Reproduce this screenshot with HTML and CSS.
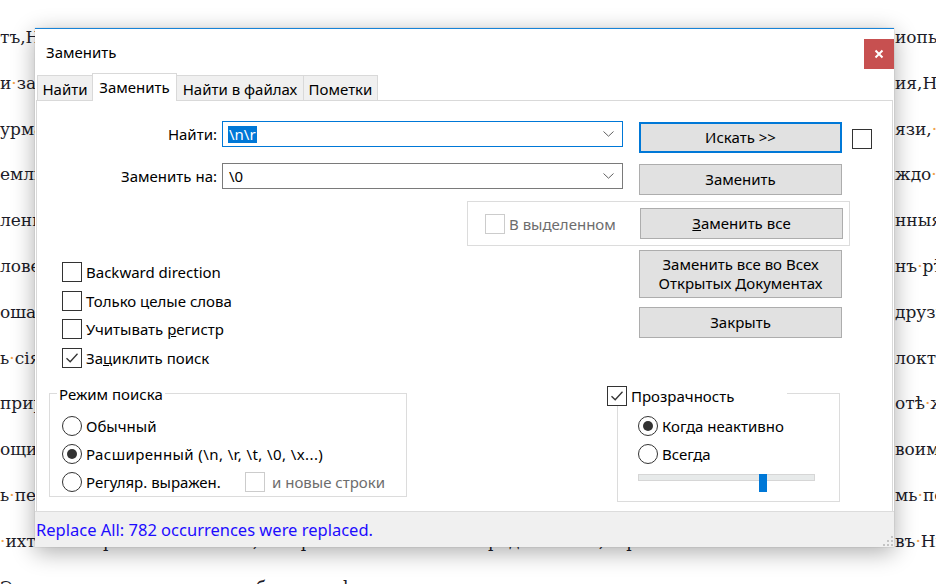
FILE: index.html
```html
<!DOCTYPE html>
<html lang="ru">
<head>
<meta charset="utf-8">
<title>Заменить</title>
<link rel="stylesheet" href="styles.css">
</head>
<body>
<div class="editor">
  <div class="line"><span class="l">тъ,Нѣкогда<i>·</i>во<i>·</i>дни<i>·</i>оны<i>·</i>жилъ<i>·</i>былъ<i>·</i>человѣкъ,<i>·</i>ему<i>·</i>же<i>·</i>имя<i>·</i>бяше</span><span class="r">иопьскій</span></div>
  <div class="line"><span class="l">и<i>·</i>закона<i>·</i>хранитель<i>·</i>бысть<i>·</i>и<i>·</i>праведенъ</span><span class="r">ия,Нѣкоторые</span></div>
  <div class="line"><span class="l">урма<i>·</i>своего<i>·</i>не<i>·</i>оставляше<i>·</i>никогда</span><span class="r">язи,<i>·</i>и<i>·</i>бысть</span></div>
  <div class="line"><span class="l">емлю<i>·</i>ту<i>·</i>населяху<i>·</i>многія<i>·</i>языки</span><span class="r">ждо<i>·</i>своя</span></div>
  <div class="line"><span class="l">лени<i>·</i>градовъ<i>·</i>и<i>·</i>весей<i>·</i>многихъ</span><span class="r">нныя<i>·</i>страны</span></div>
  <div class="line"><span class="l">лове<i>·</i>же<i>·</i>и<i>·</i>звѣри<i>·</i>въ<i>·</i>горахъ</span><span class="r">нъ<i>·</i>рѣки</span></div>
  <div class="line"><span class="l">оша<i>·</i>и<i>·</i>рыбы<i>·</i>въ<i>·</i>морѣ<i>·</i>глубоцѣмъ</span><span class="r">друзи</span></div>
  <div class="line"><span class="l">ь<i>·</i>сія<i>·</i>вся<i>·</i>видѣвъ<i>·</i>и<i>·</i>разумѣвъ</span><span class="r">локтей</span></div>
  <div class="line"><span class="l">прир<i>·</i>оды<i>·</i>всея<i>·</i>тварныя<i>·</i>написа</span><span class="r">отѣ<i>·</i>же</span></div>
  <div class="line"><span class="l">ощимъ<i>·</i>и<i>·</i>грядущимъ<i>·</i>родомъ</span><span class="r">воимъ</span></div>
  <div class="line"><span class="l">ь<i>·</i>пещеры<i>·</i>и<i>·</i>пустыни<i>·</i>многи</span><span class="r">мь<i>·</i>по</span></div>
  <div class="line"><span class="l"><i>·</i>ихтіосъ<i>·</i>бо<i>·</i>рыба<i>·</i>глаголется,<i>·</i>и<i>·</i>обрѣтоша<i>·</i>ю<i>·</i>мнози<i>·</i>во<i>·</i>градѣ<i>·</i>своемъ,<i>·</i>и<i>·</i>рекоша</span><span class="r">въ<i>·</i>Нихъ</span></div>
  <div class="line"><span class="l">Э                                             б              ѣ</span><span class="r"></span></div>
</div>

<div class="dialog">
  <div class="titlebar">
    <span class="title">Заменить</span>
    <div class="close"><svg width="10" height="10" viewBox="0 0 10 10"><path d="M1.5 1.5L8.5 8.5M8.5 1.5L1.5 8.5" stroke="#fff" stroke-width="2" fill="none"/></svg></div>
  </div>
  <div class="tabs">
    <div class="tab t1">Найти</div>
    <div class="tab t2 active">Заменить</div>
    <div class="tab t3">Найти в файлах</div>
    <div class="tab t4">Пометки</div>
  </div>
  <div class="panel">
    <div class="row r1">
      <span class="lbl">Найти:</span>
      <div class="combo focus"><span class="val"><span class="sel">\n\r</span></span><svg class="chev" width="11" height="6" viewBox="0 0 11 6"><path d="M0.5 0.5L5.5 5.2L10.5 0.5" stroke="#606060" fill="none"/></svg></div>
      <div class="btn primary b-find">Искать &gt;&gt;</div>
      <span class="cb side"></span>
    </div>
    <div class="row r2">
      <span class="lbl">Заменить на:</span>
      <div class="combo"><span class="val">\0</span><svg class="chev" width="11" height="6" viewBox="0 0 11 6"><path d="M0.5 0.5L5.5 5.2L10.5 0.5" stroke="#606060" fill="none"/></svg></div>
      <div class="btn b-rep">Заменить</div>
    </div>
    <div class="selgroup">
      <span class="cb disabled"></span><span class="dis-text">В выделенном</span>
      <div class="btn b-all"><span><u>З</u>аменить все</span></div>
    </div>
    <div class="mid">
      <div class="opts">
        <div class="opt"><span class="cb"></span><span>Backward direction</span></div>
        <div class="opt"><span class="cb"></span><span>Только целые слова</span></div>
        <div class="opt"><span class="cb"></span><span>Учитывать <u>р</u>егистр</span></div>
        <div class="opt"><span class="cb"><svg width="18" height="18" viewBox="0 0 18 18"><path d="M3.5 9.2L7.2 12.8L14.5 4.8" stroke="#333" stroke-width="1.3" fill="none"/></svg></span><span>За<u>ц</u>иклить поиск</span></div>
      </div>
      <div class="btncol">
        <div class="btn tall"><span>Заменить все во Всех<br>Открытых Документах</span></div>
        <div class="btn b-close">Закрыть</div>
      </div>
    </div>
    <div class="bottom">
      <div class="group mode">
        <div class="gtitle">Режим поиска</div>
        <div class="radios">
          <div class="opt r"><span class="rb"></span><span>Обычный</span></div>
          <div class="opt r"><span class="rb on"></span><span class="ext">Расширенный (\n, \r, \t, \0, \x...)</span></div>
          <div class="opt r"><span class="rb"></span><span class="rlbl">Регуляр. выражен.</span><span class="cb disabled"></span><span class="dis-text nl">и новые строки</span></div>
        </div>
      </div>
      <div class="group trans">
        <div class="thead"><span class="cb"><svg width="18" height="18" viewBox="0 0 18 18"><path d="M3.5 9.2L7.2 12.8L14.5 4.8" stroke="#333" stroke-width="1.3" fill="none"/></svg></span><span>Прозрачность</span></div>
        <div class="radios tr">
          <div class="opt r"><span class="rb on"></span><span>Когда неактивно</span></div>
          <div class="opt r"><span class="rb"></span><span>Всегда</span></div>
        </div>
        <div class="slider"><span class="track"></span><span class="thumb"></span></div>
      </div>
    </div>
  </div>
  <div class="status">
    <span class="msg">Replace All: 782 occurrences were replaced.</span>
    <svg class="grip" width="10" height="10" viewBox="0 0 10 10"><g fill="#c4c4c4"><rect x="8" y="0" width="2" height="2"/><rect x="4" y="4" width="2" height="2"/><rect x="8" y="4" width="2" height="2"/><rect x="0" y="8" width="2" height="2"/><rect x="4" y="8" width="2" height="2"/><rect x="8" y="8" width="2" height="2"/></g></svg>
  </div>
</div>
</body>
</html>
```

FILE: styles.css
```css
html, body {
  margin: 0;
  padding: 0;
}
body {
  width: 936px;
  height: 584px;
  overflow: hidden;
  position: relative;
  background: #fff;
}

/* background editor */
.editor {
  padding-top: 15px;
  font-family: "DejaVu Serif", serif;
  font-size: 17px;
  color: #1c1c28;
}
.line {
  display: flex;
  white-space: pre;
  height: 45.8px;
  line-height: 45.8px;
}
.line .l {
  flex: 0 0 895px;
  overflow: hidden;
}
.line .r {
  flex: none;
}
.line i {
  font-style: normal;
  color: #f0a048;
}

/* dialog window */
.dialog {
  position: absolute;
  left: 35px;
  top: 28px;
  width: 859px;
  height: 519px;
  box-sizing: border-box;
  border-top: 1px solid #1883d7;
  background: #fff;
  box-shadow: 0 5px 22px rgba(0, 0, 0, 0.33), 0 0 1px rgba(0, 0, 0, 0.25);
  display: flex;
  flex-direction: column;
  font-family: "Noto Sans", sans-serif;
  font-size: 15px;
  color: #000;
}
.titlebar {
  height: 44px;
  flex: none;
  display: flex;
  align-items: flex-start;
}
.title {
  margin: 13px 0 0 11px;
  line-height: 20px;
}
.close {
  margin-left: auto;
  margin-top: 10px;
  width: 30px;
  height: 30px;
  background: #c75050;
  display: flex;
  align-items: center;
  justify-content: center;
}

/* tabs */
.tabs {
  height: 27px;
  flex: none;
  display: flex;
  align-items: flex-end;
  padding-left: 2px;
  position: relative;
  z-index: 1;
}
.tab {
  height: 25px;
  box-sizing: border-box;
  border: 1px solid #d9d9d9;
  border-bottom: none;
  background: #f0f0f0;
  display: flex;
  align-items: center;
  justify-content: center;
  line-height: 18px;
  padding-top: 1px;
}
.tab + .tab { margin-left: -1px; }
.t1 { width: 56px; }
.t2 { width: 85px; }
.t3 { width: 128px; }
.t4 { width: 75px; }
.tab.active {
  height: 28px;
  margin-bottom: -1px;
  background: #fff;
  position: relative;
  z-index: 2;
  padding-top: 0;
  padding-bottom: 2px;
}

/* panel */
.panel {
  flex: 1;
  margin: 0 1px;
  border: 1px solid #d9d9d9;
  border-bottom: none;
  padding-top: 20px;
  box-sizing: border-box;
}
.row {
  display: flex;
  align-items: flex-start;
}
.r2 { margin-top: 10px; }
.lbl {
  width: 180px;
  text-align: right;
  line-height: 26px;
  margin-right: 5px;
  flex: none;
}
.combo {
  width: 401px;
  height: 26px;
  box-sizing: border-box;
  border: 1px solid #7a7a7a;
  display: flex;
  align-items: center;
  padding-left: 6px;
  flex: none;
}
.combo.focus {
  border-color: #0078d7;
  padding-left: 5px;
}
.sel {
  background: #0078d7;
  color: #fff;
  padding: 0 1px;
  line-height: 17px;
  display: inline-block;
}
.chev {
  margin-left: auto;
  margin-right: 8px;
}
.btn {
  width: 203px;
  height: 31px;
  box-sizing: border-box;
  border: 1px solid #adadad;
  background: #e1e1e1;
  display: flex;
  align-items: center;
  justify-content: center;
  text-align: center;
  line-height: 19px;
  flex: none;
}
.btn.primary {
  border: 2px solid #0078d7;
}
.b-find, .b-rep {
  margin-left: 16px;
  margin-top: 1px;
}
.cb {
  width: 20px;
  height: 20px;
  box-sizing: border-box;
  border: 1px solid #333;
  background: #fff;
  flex: none;
  display: flex;
  align-items: center;
  justify-content: center;
}
.cb.side {
  margin-left: 10px;
  margin-top: 8px;
}
.cb.disabled {
  border-color: #cccccc;
}
.dis-text {
  color: #6d6d6d;
  margin-left: 4px;
}

/* in-selection group */
.selgroup {
  margin: 6px 0 0 430px;
  width: 383px;
  height: 45px;
  box-sizing: border-box;
  border: 1px solid #dcdcdc;
  display: flex;
  align-items: center;
}
.selgroup .cb { margin-left: 17px; }
.b-all {
  margin-left: auto;
  margin-right: 6px;
}

/* middle block */
.mid {
  display: flex;
}
.opts {
  width: 577px;
  padding-left: 25px;
  padding-top: 12px;
}
.opt {
  display: flex;
  align-items: center;
  height: 28.5px;
}
.opt .cb, .opt .rb {
  margin-right: 4px;
}
.btncol {
  padding-top: 4px;
}
.btn.tall {
  height: 48px;
  line-height: 19px;
}
.b-close { margin-top: 9px; }

/* bottom groups */
.bottom {
  display: flex;
  align-items: flex-start;
  margin-top: 21px;
}
.group {
  border: 1px solid #dcdcdc;
  box-sizing: border-box;
}
.mode {
  margin-left: 12px;
  width: 358px;
  padding-left: 12px;
}
.gtitle {
  margin: -8px 0 0 -5px;
  padding: 0 2px;
  background: #fff;
  width: max-content;
  line-height: 16px;
}
.radios {
  margin-top: 10px;
}
.opt.r {
  height: 28px;
}
.ext {
  letter-spacing: 0.4px;
}
.rb {
  width: 20px;
  height: 20px;
  box-sizing: border-box;
  border: 1px solid #333;
  border-radius: 50%;
  background: #fff;
  flex: none;
  display: flex;
  align-items: center;
  justify-content: center;
}
.rb.on::after {
  content: "";
  width: 10px;
  height: 10px;
  border-radius: 50%;
  background: #333;
}
.rlbl {
  width: 159px;
  flex: none;
}
.nl { margin-left: 3px; }

.trans {
  margin-left: 210px;
  width: 223px;
  padding-left: 20px;
  padding-bottom: 9px;
}
.thead {
  display: flex;
  align-items: center;
  height: 20px;
  width: 180px;
  margin: -8px 0 0 -31px;
  background: #fff;
}
.thead .cb { margin-right: 4px; }
.radios.tr {
  margin-top: 6px;
}
.slider {
  position: relative;
  height: 18px;
  margin-top: 1px;
  width: 177px;
}
.track {
  display: block;
  margin-top: 6px;
  height: 7px;
  box-sizing: border-box;
  border: 1px solid #d6d6d6;
  background: #e7eaea;
}
.thumb {
  position: absolute;
  left: 121px;
  top: 0;
  width: 8px;
  height: 18px;
  background: #0078d7;
}

/* status bar */
.status {
  height: 36px;
  flex: none;
  box-sizing: border-box;
  border-top: 1px solid #dcdcdc;
  background: #f0f0f0;
  display: flex;
  align-items: center;
  padding-left: 1px;
  color: #1d0cff;
  font-size: 16.5px;
}
.grip {
  margin-left: auto;
  align-self: flex-end;
  margin-right: 1px;
  margin-bottom: 1px;
}
```
